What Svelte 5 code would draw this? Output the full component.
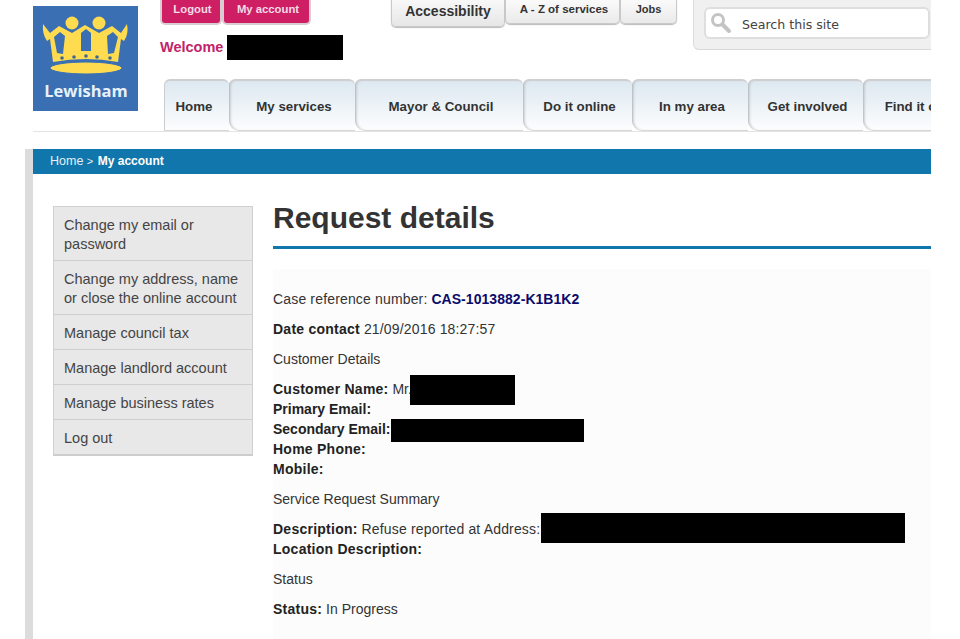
<script>
  const navItems = [
    { label: 'Home', width: 65 },
    { label: 'My services', width: 126 },
    { label: 'Mayor & Council', width: 168 },
    { label: 'Do it online', width: 109 },
    { label: 'In my area', width: 116 },
    { label: 'Get involved', width: 115 },
    { label: 'Find it online', width: 122 }
  ];

  const sideLinks = [
    'Change my email or password',
    'Change my address, name or close the online account',
    'Manage council tax',
    'Manage landlord account',
    'Manage business rates',
    'Log out'
  ];
</script>

<div class="page">
  <header class="header">
    <div class="logo">
      <svg width="105" height="74" viewBox="0 0 105 74">
        <circle cx="39" cy="17" r="6.500" fill="#fedb4f" />
        <circle cx="66" cy="17" r="6.500" fill="#fedb4f" />
        <path fill="#fedb4f" d="M10 18 L17 27 L26 20 L39 27 L52 19 L66 27 L79 20 L88 27 L94 18 Q96 28 91 35 L88 33 L85 56 Q53 50 20 56 L17 33 L14 35 Q9 28 10 18 Z" />
        <path fill="#3a6fb4" d="M27 26 L32 30 L30 48 L24 47 L21 31 Z M53 23 L58 27 L58 45 L48 45 L48 27 Z M80 26 L85 31 L81 47 L75 48 L74 30 Z" />
        <g fill="#42688f">
          <circle cx="29" cy="52" r="1.800" /><circle cx="41" cy="51" r="1.800" /><circle cx="53" cy="50" r="1.800" /><circle cx="64" cy="51" r="1.800" /><circle cx="77" cy="52" r="1.800" />
        </g>
        <ellipse cx="53" cy="62" rx="36" ry="6" fill="#fedb4f" stroke="#3a6fb4" stroke-width="1" />
      </svg>
      <span class="logo-name">Lewisham</span>
    </div>

    <div class="header-main">
      <div class="top-row">
        <div class="user-col">
          <div class="account-tabs">
            <a class="account-tab logout" href="#logout">Logout</a>
            <a class="account-tab myaccount" href="#account">My account</a>
          </div>
          <div class="welcome">Welcome <span class="welcome-name"></span></div>
        </div>
        <div class="util-tabs">
          <a class="util-tab access" href="#a">Accessibility</a>
          <a class="util-tab az" href="#az">A - Z of services</a>
          <a class="util-tab jobs" href="#jobs">Jobs</a>
        </div>
        <div class="search-wrap">
          <div class="search-box">
            <svg width="24" height="24" viewBox="0 0 24 24" fill="none" stroke="#c4c4c4">
              <circle cx="9" cy="9" r="5.500" stroke-width="3" />
              <path d="M13.500 13.500 L20 20" stroke-width="4" stroke-linecap="round" />
            </svg>
            <span>Search this site</span>
          </div>
        </div>
      </div>
      <nav class="nav">
        {#each navItems as item}
          <a class="nav-tab" href="#nav" style="width: {item.width}px">{item.label}</a>
        {/each}
      </nav>
    </div>
  </header>

  <div class="body-wrap">
    <div class="crumbs">Home <span class="sep">&gt;</span> <b>My account</b></div>
    <div class="columns">
      <aside class="side">
        {#each sideLinks as link}
          <a class="side-link" href="#side">{link}</a>
        {/each}
      </aside>
      <main class="main">
        <h1>Request details</h1>
        <div class="details">
          <p><span class="wide">Case reference number:</span> <b class="ref">CAS-1013882-K1B1K2</b></p>
          <p><b>Date contact</b> <span class="wide">21/09/2016 18:27:57</span></p>
          <p>Customer Details</p>
          <p>
            <b>Customer Name:</b> Mr.<span class="redact r-name"></span><br />
            <b class="tight">Primary Email:</b><br />
            <b class="tight">Secondary Email:</b><span class="redact r-mail"></span><br />
            <b>Home Phone:</b><br />
            <b>Mobile:</b>
          </p>
          <p>Service Request Summary</p>
          <p>
            <b>Description:</b> <span class="wide">Refuse reported at Address:</span><span class="redact r-addr"></span><br />
            <b>Location Description:</b>
          </p>
          <p>Status</p>
          <p><b>Status:</b> In Progress</p>
        </div>
      </main>
    </div>
  </div>
</div>

<style>
  :global(body) {
    background: #fff;
    font-family: "Liberation Sans", Arial, sans-serif;
    color: #333;
  }

  a {
    text-decoration: none;
    color: inherit;
  }

  .page {
    width: 931px;
    height: 639px;
    overflow: hidden;
    box-sizing: border-box;
    padding-left: 25px;
  }

  .header {
    display: flex;
    margin-left: 8px;
    height: 132px;
    box-sizing: border-box;
    border-bottom: 1px solid #e4e4e4;
  }

  .logo {
    width: 105px;
    height: 105px;
    margin-top: 6px;
    background: #3a6fb4;
    flex-shrink: 0;
    text-align: center;
  }

  .logo svg {
    display: block;
  }

  .logo-name {
    display: block;
    font-family: "Open Sans", sans-serif;
    font-weight: 700;
    font-size: 16.500px;
    line-height: 22px;
    color: #e6f1fa;
    margin-left: 1px;
  }

  .header-main {
    margin-left: 22px;
    flex: 1;
    min-width: 0;
  }

  .top-row {
    display: flex;
    height: 79px;
  }

  .user-col {
    width: 231px;
    flex-shrink: 0;
  }

  .account-tabs {
    display: flex;
    height: 25px;
    width: 151px;
  }

  .account-tab {
    background: #cf1f64;
    color: #f4dbe6;
    font-size: 11.300px;
    font-weight: 700;
    line-height: 18px;
    text-align: center;
    box-sizing: border-box;
    border: 2px solid #d9cdd3;
    border-top: 0;
    border-radius: 0 0 5px 5px;
    padding-left: 3px;
  }

  .logout {
    width: 62px;
  }

  .myaccount {
    width: 89px;
  }

  .welcome {
    display: flex;
    align-items: center;
    margin-top: 10px;
    height: 25px;
    font-size: 14.500px;
    font-weight: 700;
    color: #c2236a;
    white-space: pre;
    line-height: 23px;
  }

  .welcome-name {
    width: 116px;
    height: 25px;
    background: #000;
  }

  .util-tabs {
    display: flex;
    align-items: flex-start;
    width: 286px;
    flex-shrink: 0;
  }

  .util-tab {
    box-sizing: border-box;
    text-align: center;
    border: 1px solid #c9c9c9;
    border-top: 0;
    border-radius: 0 0 5px 5px;
    font-weight: 700;
    color: #333;
    background: linear-gradient(#fafafa, #eaeaea);
    box-shadow: 0 1px 1px #bbb;
  }

  .access {
    width: 114px;
    height: 27px;
    font-size: 14px;
    line-height: 22px;
    background: linear-gradient(#f8f8f8, #e6e6e6);
  }

  .az {
    width: 115px;
    height: 24px;
    font-size: 11.500px;
    line-height: 18px;
    padding-left: 3px;
  }

  .jobs {
    width: 57px;
    height: 24px;
    font-size: 11px;
    line-height: 18px;
  }

  .search-wrap {
    flex: 1;
    height: 50px;
    background: #f0f0f0;
    border-left: 1px solid #dcdcdc;
    border-bottom: 1px solid #d8d8d8;
    border-radius: 0 0 0 6px;
    box-sizing: border-box;
    padding: 7px 0 0 10px;
    margin-left: 16px;
  }

  .search-box {
    display: flex;
    align-items: center;
    width: 226px;
    height: 32px;
    box-sizing: border-box;
    background: #fff;
    border: 2px solid #dedede;
    border-radius: 6px;
    padding-left: 3px;
    font-family: "DejaVu Sans", sans-serif;
    font-size: 12.600px;
    color: #444;
  }

  .search-box span {
    margin-left: 9px;
    padding-top: 2px;
  }

  .nav {
    display: flex;
    margin-left: 4px;
    height: 52px;
  }

  .nav-tab {
    flex-shrink: 0;
    box-sizing: border-box;
    height: 52px;
    padding: 16px 0 0 4px;
    text-align: center;
    font-size: 13.300px;
    font-weight: 700;
    line-height: 20px;
    color: #333;
    white-space: nowrap;
    overflow: hidden;
    background: linear-gradient(#dde8f0, #fcfdfe);
    border-top: 2px solid #cfcfcf;
    border-bottom: 1px solid #d8d8d8;
    border-radius: 6px 6px 0 10px;
    box-shadow: inset 3px 0 3px -2px #a8acb0;
  }

  .nav-tab:first-child {
    padding: 16px 6px 0 0;
    border-left: 1px solid #c9cdd0;
    border-radius: 6px 6px 0 0;
    box-shadow: none;
  }

  .body-wrap {
    margin-top: 17px;
    height: 490px;
    border-left: 8px solid #dcdcdc;
  }

  .crumbs {
    height: 25px;
    background: #1176ab;
    color: #e6f1f7;
    font-size: 12.500px;
    line-height: 25px;
    padding-left: 17px;
  }

  .crumbs .sep {
    font-size: 11px;
  }

  .crumbs b {
    color: #fff;
    font-size: 12px;
    margin-left: 1px;
  }

  .columns {
    display: flex;
    padding: 32px 0 0 20px;
  }

  .side {
    width: 200px;
    height: 250px;
    flex-shrink: 0;
    box-sizing: border-box;
    background: #e8e8e8;
    border: 1px solid #d0d0d0;
    border-bottom: 2px solid #cdcdcd;
  }

  .side-link {
    display: block;
    padding: 9px 10px 6px;
    font-size: 14.500px;
    line-height: 19px;
    color: #444;
    border-bottom: 1px solid #cfcfcf;
  }

  .side-link:last-child {
    border-bottom: 0;
  }

  .main {
    margin-left: 20px;
    flex: 1;
    min-width: 0;
  }

  h1 {
    margin: 0;
    height: 43px;
    box-sizing: border-box;
    border-bottom: 3px solid #1176ab;
    font-size: 30px;
    line-height: 24px;
    color: #333;
  }

  .details {
    margin-top: 20px;
    height: 400px;
    background: #fcfcfc;
    padding-top: 20px;
    font-size: 14px;
    line-height: 20px;
    color: #333;
  }

  .details p {
    margin: 0 0 10px;
    position: relative;
  }

  .details b {
    color: #222;
    letter-spacing: 0.25px;
  }

  .details .ref {
    color: #0b0b6b;
    letter-spacing: 0.05px;
  }

  .details .tight {
    letter-spacing: 0;
  }

  .wide {
    letter-spacing: 0.16px;
  }

  .redact {
    position: absolute;
    background: #000;
  }

  .r-name {
    left: 137px;
    top: -4px;
    width: 105px;
    height: 30px;
  }

  .r-mail {
    left: 118px;
    top: 40px;
    width: 193px;
    height: 23px;
  }

  .r-addr {
    left: 268px;
    top: -6px;
    width: 364px;
    height: 30px;
  }
</style>
